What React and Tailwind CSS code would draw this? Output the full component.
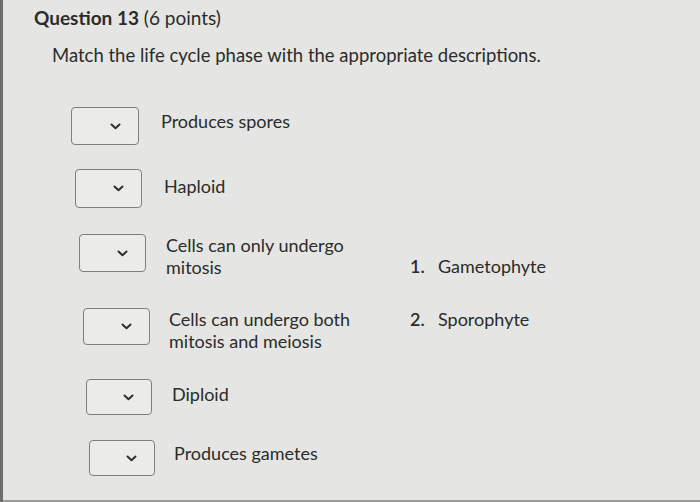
const rows = [
  { text: ['Produces spores'], ml: 'ml-[68px]', h: 'h-[62px]', box: 'w-[68px] h-[38px]', tm: 'mt-[3px]', gap: 'gap-[22px]' },
  { text: ['Haploid'], ml: 'ml-[72px]', h: 'h-[65px]', box: 'w-[67px] h-[39px]', tm: 'mt-[6px]', gap: 'gap-[22px]' },
  { text: ['Cells can only undergo', 'mitosis'], ml: 'ml-[76px]', h: 'h-[74px]', box: 'w-[67px] h-[38px]', tm: 'mt-0', gap: 'gap-[20px]' },
  { text: ['Cells can undergo both', 'mitosis and meiosis'], ml: 'ml-[80px]', h: 'h-[71px]', box: 'w-[67px] h-[37px]', tm: 'mt-0', gap: 'gap-[19px]' },
  { text: ['Diploid'], ml: 'ml-[83px]', h: 'h-[61px]', box: 'w-[66px] h-[36px]', tm: 'mt-[4px]', gap: 'gap-[20px]' },
  { text: ['Produces gametes'], ml: 'ml-[86px]', h: 'h-[50px]', box: 'w-[66px] h-[36px]', tm: 'mt-[2px]', gap: 'gap-[19px]' },
]

function Select({ size }) {
  return (
    <div className={`${size} shrink-0 rounded-[4px] border-[1.5px] border-[#7d7f7c] bg-[#ebecea] flex items-center justify-end pr-[17px]`}>
      <svg width="11" height="7" viewBox="0 0 11 7" fill="none">
        <path d="M1.5 1.5L5.5 5.2L9.5 1.5" stroke="#2e2e2e" strokeWidth="2" strokeLinecap="round" strokeLinejoin="round" />
      </svg>
    </div>
  )
}

export default function App() {
  return (
    <div className="w-[700px] h-[502px] overflow-hidden bg-[#e5e6e3] border-l-[3px] border-[#6e6f6c] text-[#2b2b2a] flex flex-col" style={{ fontFamily: 'Lato, "Open Sans", sans-serif' }}>
      <div className="pl-[31px] pt-[6px] text-[19px] leading-[24px]">
        <span className="font-bold">Question 13</span> (6 points)
      </div>
      <div className="pl-[49px] mt-[13px] text-[18.5px] leading-[24px]">
        Match the life cycle phase with the appropriate descriptions.
      </div>
      <div className="flex mt-[40px] flex-1">
        <div className="w-[407px] flex flex-col">
          {rows.map((r, i) => (
            <div key={i} className={`${r.h} ${r.ml} ${r.gap} flex items-start`}>
              <Select size={r.box} />
              <div className={`${r.tm} text-[18px] leading-[22px]`}>
                {r.text.map((t, j) => (
                  <div key={j}>{t}</div>
                ))}
              </div>
            </div>
          ))}
        </div>
        <div className="pt-[148px] flex flex-col gap-[31px] text-[18px] leading-[22px]">
          <div className="flex"><span className="w-[28px] font-semibold">1.</span>Gametophyte</div>
          <div className="flex"><span className="w-[28px] font-semibold">2.</span>Sporophyte</div>
        </div>
      </div>
      <div className="h-[2px] bg-[#9a9b98]" />
    </div>
  )
}
